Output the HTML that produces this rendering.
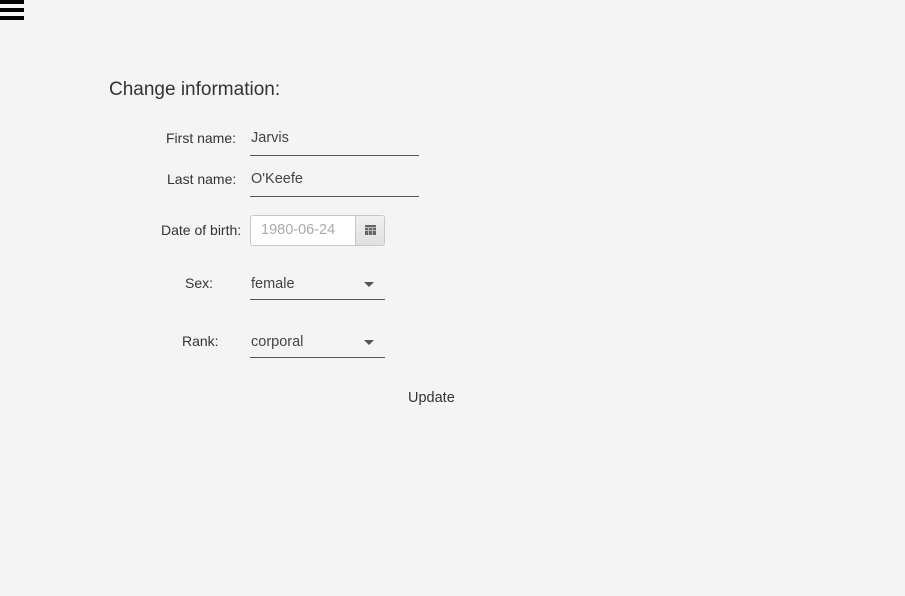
<!DOCTYPE html>
<html><head><meta charset="utf-8"><style>
html,body{margin:0;padding:0;width:905px;height:596px;background:#f4f4f4;overflow:hidden;font-family:"Liberation Sans",sans-serif;color:#333}
.a{position:absolute}
.bar{position:absolute;left:0;width:24px;height:4px;background:#000}
.lbl{position:absolute;font-size:14px;color:#333;white-space:nowrap}
.val{position:absolute;font-size:14.5px;color:#444}
.line{position:absolute;height:1px;background:#555}
.tri{position:absolute;width:0;height:0;border-left:5px solid transparent;border-right:5px solid transparent;border-top:5px solid #555}
</style></head><body>
<div class="bar" style="top:0"></div>
<div class="bar" style="top:8px"></div>
<div class="bar" style="top:16px"></div>

<div class="a" style="left:109px;top:79px;font-size:19px;color:#333">Change information:</div>

<div class="lbl" style="left:166px;top:130px">First name:</div>
<div class="val" style="left:251px;top:130px">Jarvis</div>
<div class="line" style="left:250px;top:155px;width:169px"></div>

<div class="lbl" style="left:167px;top:171px">Last name:</div>
<div class="val" style="left:251px;top:171px">O'Keefe</div>
<div class="line" style="left:250px;top:196px;width:169px"></div>

<div class="lbl" style="left:161px;top:222px">Date of birth:</div>
<div class="a" style="left:250px;top:215px;width:133px;height:29px;border:1px solid #c8c8c8;border-radius:3px;background:#fff;overflow:hidden">
  <div class="a" style="left:10px;top:6px;font-size:14.5px;color:#aaa">1980-06-24</div>
  <div class="a" style="left:104px;top:0;width:29px;height:29px;border-left:1px solid #c8c8c8;background:linear-gradient(#f0f0f0,#e0e0e0)">
    <div class="a" style="left:9px;top:9px;width:11px;height:10px;background:#666"></div>
    <div class="a" style="left:9px;top:11px;width:11px;height:1px;background:#bbb"></div>
    <div class="a" style="left:9px;top:14px;width:11px;height:1px;background:#bbb"></div>
    <div class="a" style="left:12px;top:11px;width:1px;height:8px;background:#bbb"></div>
    <div class="a" style="left:16px;top:11px;width:1px;height:8px;background:#bbb"></div>
  </div>
</div>

<div class="lbl" style="left:185px;top:275px">Sex:</div>
<div class="val" style="left:251px;top:276px">female</div>
<div class="tri" style="left:364px;top:282px"></div>
<div class="line" style="left:250px;top:299px;width:135px"></div>

<div class="lbl" style="left:182px;top:333px">Rank:</div>
<div class="val" style="left:251px;top:334px">corporal</div>
<div class="tri" style="left:364px;top:340px"></div>
<div class="line" style="left:250px;top:357px;width:135px"></div>

<div class="lbl" style="left:408px;top:390px;font-size:14.5px">Update</div>
</body></html>
